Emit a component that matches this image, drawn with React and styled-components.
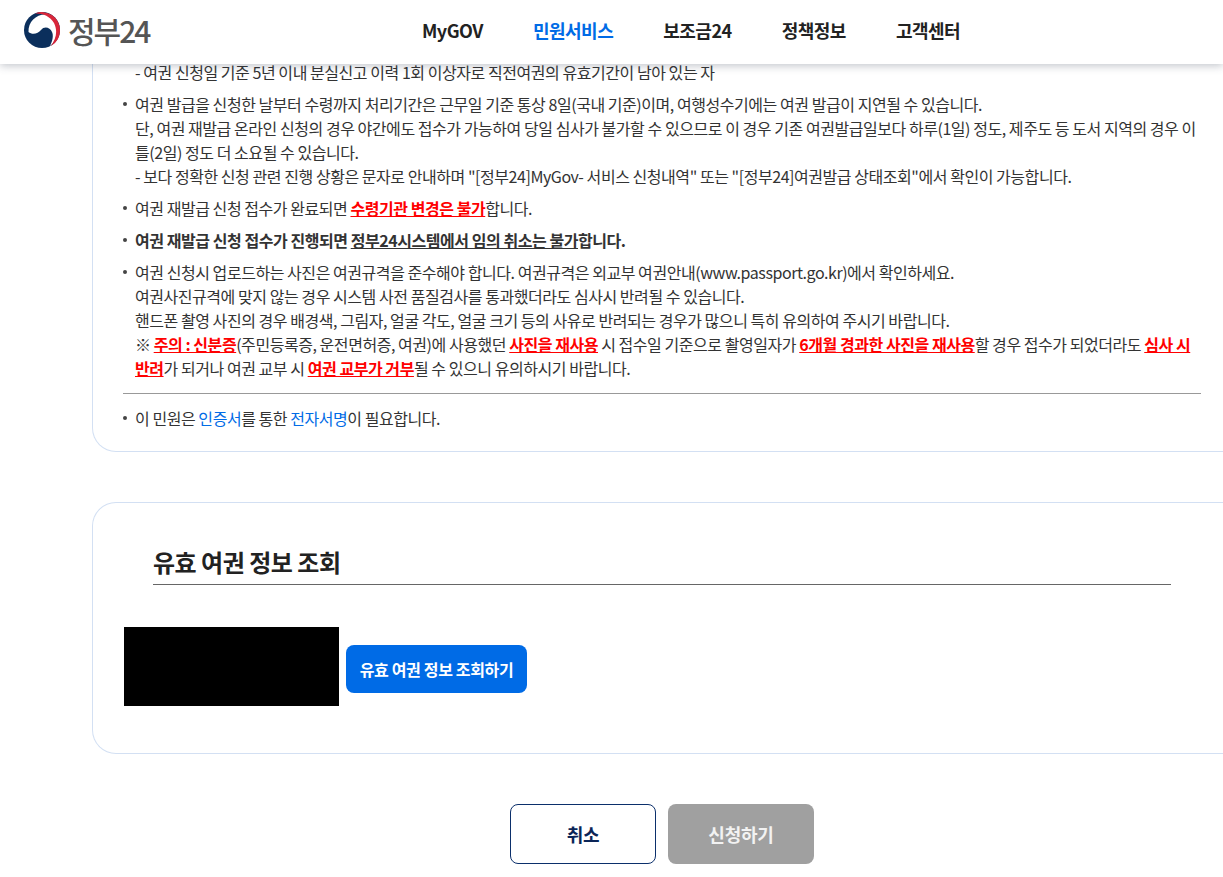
import styled, { createGlobalStyle } from "styled-components";

const GlobalStyle = createGlobalStyle`
  html, body {
    margin: 0;
    padding: 0;
    background: #fff;
    overflow: hidden;
  }
  body {
    font-family: "Noto Sans CJK KR", "Noto Sans", sans-serif;
    color: #333;
  }
`;

const Page = styled.div`
  width: 1223px;
  height: 877px;
  overflow: hidden;
`;

const Header = styled.header`
  height: 64px;
  box-sizing: border-box;
  padding-bottom: 5px;
  background: #fff;
  box-shadow: 0 2px 8px rgba(60, 70, 90, 0.3);
  display: flex;
  align-items: center;
  position: relative;
  z-index: 2;
`;

const Logo = styled.div`
  display: flex;
  align-items: center;
  gap: 7px;
  margin-left: 23px;
  width: 399px;
`;

const LogoText = styled.span`
  font-size: 30px;
  font-weight: 500;
  letter-spacing: -2px;
  color: #555;
  line-height: 1;
`;

const Nav = styled.nav`
  display: flex;
  gap: 50px;
`;

const NavItem = styled.a`
  font-size: 18px;
  font-weight: 700;
  letter-spacing: -0.5px;
  color: ${(props) => (props.$active ? "#006be6" : "#222")};
`;

const Main = styled.main`
  margin: -4px -24px 0 0;
  padding-left: 92px;
`;

const NoticeCard = styled.section`
  border: 1px solid #d3e0f3;
  border-top: none;
  border-radius: 0 0 0 24px;
  padding: 0 45px 20px 30px;
  height: 392px;
  box-sizing: border-box;
  font-size: 16px;
  line-height: 24px;
  letter-spacing: -0.45px;
  white-space: nowrap;
`;

const SubLine = styled.div`
  padding-left: 12px;
  margin-bottom: 8px;
  height: 24px;
`;

const List = styled.ul`
  list-style: none;
  margin: 0;
  padding: 0;
  display: flex;
  flex-direction: column;
  gap: 8px;
`;

const Item = styled.li`
  padding-left: 12px;
  position: relative;
  font-weight: ${(props) => (props.$bold ? 700 : 400)};
  &::before {
    content: "";
    position: absolute;
    left: 0;
    top: 10px;
    width: 4px;
    height: 4px;
    border-radius: 50%;
    background: #444;
  }
`;

const Warn = styled.strong`
  color: #f00;
  font-weight: 700;
  text-decoration: underline;
`;

const Hl = styled.span`
  color: #006be6;
`;

const Under = styled.span`
  text-decoration: underline;
`;

const Divider = styled.hr`
  border: none;
  border-top: 1px solid #999;
  margin: 5px 0 4px;
`;

const QueryCard = styled.section`
  margin-top: 50px;
  height: 252px;
  box-sizing: border-box;
  border: 1px solid #d3e0f3;
  border-right: none;
  border-radius: 24px 0 0 24px;
  padding: 40px 0 0 31px;
`;

const SectionTitle = styled.h2`
  margin: 0 76px 0 29px;
  width: 1018px;
  height: 42px;
  box-sizing: border-box;
  border-bottom: 1px solid #666;
  font-size: 24px;
  font-weight: 700;
  line-height: 38px;
  letter-spacing: -0.5px;
  color: #222;
`;

const QueryRow = styled.div`
  display: flex;
  align-items: flex-start;
  gap: 7px;
  margin-top: 42px;
`;

const Masked = styled.div`
  width: 215px;
  height: 79px;
  background: #000;
`;

const QueryButton = styled.button`
  width: 181px;
  height: 48px;
  margin-top: 18px;
  border: none;
  border-radius: 8px;
  background: #006be6;
  color: #fff;
  font: 700 16px "Noto Sans CJK KR", sans-serif;
  letter-spacing: -0.35px;
  padding: 0;
`;

const Actions = styled.div`
  display: flex;
  justify-content: center;
  gap: 12px;
  margin-top: 50px;
  padding-right: 15px;
`;

const ActionButton = styled.button`
  width: 146px;
  height: 60px;
  box-sizing: border-box;
  border-radius: 8px;
  border: ${(props) => (props.$disabled ? "none" : "1px solid #0b2f6b")};
  background: ${(props) => (props.$disabled ? "#a0a0a0" : "#fff")};
  color: ${(props) => (props.$disabled ? "#f2f2f2" : "#0b2557")};
  font: 700 18px "Noto Sans CJK KR", sans-serif;
  letter-spacing: -0.2px;
  padding: 0;
`;

function Taegeuk() {
  return (
    <svg width="38" height="38" viewBox="0 0 38 38" aria-hidden="true">
      <circle cx="19" cy="19" r="18" fill="#0b2f5c" />
      <path
        d="M5.5 21C5 11 13 3.5 22 3.5C31 4 35 12 34 21C33.5 27 31 32 27 35C30 29 30.5 24 29 21C27 16 21 15 18 19C15 23 9 24 5.5 21z"
        fill="#fff"
      />
      <path
        d="M12 2.5A18 18 0 0 1 37 19A18 18 0 0 1 28 35C33 28 35 20 31 12C27 5 19 2 12 2.5z"
        fill="#d8263a"
      />
    </svg>
  );
}

export default function App() {
  return (
    <Page>
      <GlobalStyle />
      <Header>
        <Logo>
          <Taegeuk />
          <LogoText>정부24</LogoText>
        </Logo>
        <Nav>
          <NavItem>MyGOV</NavItem>
          <NavItem $active>민원서비스</NavItem>
          <NavItem>보조금24</NavItem>
          <NavItem>정책정보</NavItem>
          <NavItem>고객센터</NavItem>
        </Nav>
      </Header>
      <Main>
        <NoticeCard>
          <SubLine>- 여권 신청일 기준 5년 이내 분실신고 이력 1회 이상자로 직전여권의 유효기간이 남아 있는 자</SubLine>
          <List>
            <Item>
              여권 발급을 신청한 날부터 수령까지 처리기간은 근무일 기준 통상 8일(국내 기준)이며, 여행성수기에는 여권 발급이 지연될 수 있습니다.
              <br />
              단, 여권 재발급 온라인 신청의 경우 야간에도 접수가 가능하여 당일 심사가 불가할 수 있으므로 이 경우 기존 여권발급일보다 하루(1일) 정도, 제주도 등 도서 지역의 경우 이
              <br />
              틀(2일) 정도 더 소요될 수 있습니다.
              <br />
              - 보다 정확한 신청 관련 진행 상황은 문자로 안내하며 "[정부24]MyGov- 서비스 신청내역" 또는 "[정부24]여권발급 상태조회"에서 확인이 가능합니다.
            </Item>
            <Item>
              여권 재발급 신청 접수가 완료되면 <Warn>수령기관 변경은 불가</Warn>합니다.
            </Item>
            <Item $bold>
              여권 재발급 신청 접수가 진행되면 <Under>정부24시스템에서 임의 취소는 불가</Under>합니다.
            </Item>
            <Item>
              여권 신청시 업로드하는 사진은 여권규격을 준수해야 합니다. 여권규격은 외교부 여권안내(www.passport.go.kr)에서 확인하세요.
              <br />
              여권사진규격에 맞지 않는 경우 시스템 사전 품질검사를 통과했더라도 심사시 반려될 수 있습니다.
              <br />
              핸드폰 촬영 사진의 경우 배경색, 그림자, 얼굴 각도, 얼굴 크기 등의 사유로 반려되는 경우가 많으니 특히 유의하여 주시기 바랍니다.
              <br />
              ※ <Warn>주의 : 신분증</Warn>(주민등록증, 운전면허증, 여권)에 사용했던 <Warn>사진을 재사용</Warn> 시 접수일 기준으로 촬영일자가 <Warn>6개월 경과한 사진을 재사용</Warn>할 경우 접수가 되었더라도 <Warn>심사 시</Warn>
              <br />
              <Warn>반려</Warn>가 되거나 여권 교부 시 <Warn>여권 교부가 거부</Warn>될 수 있으니 유의하시기 바랍니다.
            </Item>
            <Divider />
            <Item>
              이 민원은 <Hl>인증서</Hl>를 통한 <Hl>전자서명</Hl>이 필요합니다.
            </Item>
          </List>
        </NoticeCard>
        <QueryCard>
          <SectionTitle>유효 여권 정보 조회</SectionTitle>
          <QueryRow>
            <Masked />
            <QueryButton>유효 여권 정보 조회하기</QueryButton>
          </QueryRow>
        </QueryCard>
        <Actions>
          <ActionButton>취소</ActionButton>
          <ActionButton $disabled>신청하기</ActionButton>
        </Actions>
      </Main>
    </Page>
  );
}
